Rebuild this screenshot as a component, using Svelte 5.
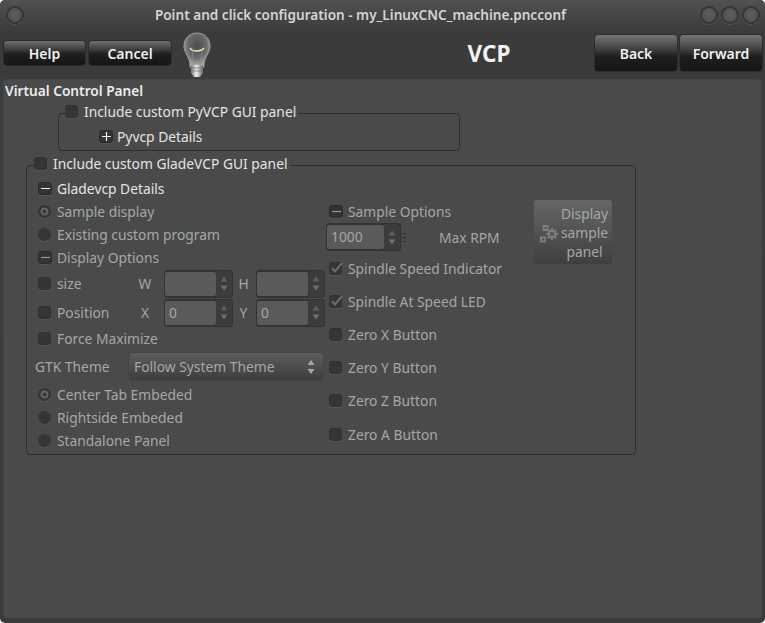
<script>
  const leftTop = [
    { kind: 'radio', label: 'Sample display', on: true },
    { kind: 'radio', label: 'Existing custom program', on: false }
  ];
  const embed = [
    { label: 'Center Tab Embeded', on: true },
    { label: 'Rightside Embeded', on: false },
    { label: 'Standalone Panel', on: false }
  ];
  const options = [
    { label: 'Spindle Speed Indicator', on: true },
    { label: 'Spindle At Speed LED', on: true },
    { label: 'Zero X Button', on: false },
    { label: 'Zero Y Button', on: false },
    { label: 'Zero Z Button', on: false },
    { label: 'Zero A Button', on: false }
  ];
</script>

{#snippet spin(value, cls = 'spin')}
  <div class={cls}>
    <span class="spin-value">{value}</span>
    <span class="spin-arrows">
      <svg width="8" height="6" viewBox="0 0 8 6"><path d="M4 0.5 7.5 5.5H0.5Z" fill="#5f5f5f" /></svg>
      <svg width="8" height="6" viewBox="0 0 8 6"><path d="M0.5 0.5H7.5L4 5.5Z" fill="#6e6e6e" /></svg>
    </span>
  </div>
{/snippet}

{#snippet check(on = false)}
  <span class="box">
    {#if on}
      <svg width="14" height="14" viewBox="0 0 14 14"><path d="M3 7 6 10.5 13 2" fill="none" stroke="#6c6c6c" stroke-width="2" /></svg>
    {/if}
  </span>
{/snippet}

{#snippet expander(minus, cls = '')}
  <span class="expander {cls}">
    <svg width="9" height="9" viewBox="0 0 9 9">
      <path d={minus ? 'M0 4.5H9' : 'M0 4.5H9M4.5 0V9'} stroke="currentColor" stroke-width="1.2" />
    </svg>
  </span>
{/snippet}

<div class="window">
  <header class="titlebar">
    <span class="dot"></span>
    <span class="title">Point and click configuration - my_LinuxCNC_machine.pncconf</span>
    <span class="dots"><span class="dot"></span><span class="dot"></span><span class="dot"></span></span>
  </header>

  <div class="toolbar">
    <div class="group small">
      <button class="tool help">Help</button>
      <button class="tool cancel">Cancel</button>
    </div>
    <svg class="bulb" width="28" height="46" viewBox="0 0 28 46">
      <defs>
        <radialGradient id="glass" cx="50%" cy="38%" r="60%">
          <stop offset="0" stop-color="#4c4c4c" />
          <stop offset="0.6" stop-color="#6a6a6a" />
          <stop offset="1" stop-color="#b5b5b5" />
        </radialGradient>
        <linearGradient id="base" x1="0" x2="1" y1="0" y2="0">
          <stop offset="0" stop-color="#777" />
          <stop offset="0.45" stop-color="#eee" />
          <stop offset="1" stop-color="#666" />
        </linearGradient>
      </defs>
      <path d="M14 1C6 1 1 7 1 14c0 7 5 10 6 18v3h14v-3c1-8 6-11 6-18C27 7 22 1 14 1Z" fill="url(#glass)" stroke="#9a9a9a" stroke-width="1" />
      <path d="M7 16c2 4 11 4 14 0" fill="none" stroke="#f1e7a0" stroke-width="1.6" />
      <path d="M9 18 11 33M19 18 17 33" fill="none" stroke="#888" stroke-width="0.8" />
      <path d="M8 33h12v8l-3 4h-6l-3-4Z" fill="url(#base)" />
      <path d="M8 36h12M8 39h12" stroke="#777" stroke-width="0.8" />
    </svg>
    <h1 class="page">VCP</h1>
    <div class="group big">
      <button class="tool back">Back</button>
      <button class="tool forward">Forward</button>
    </div>
  </div>

  <main class="panel">
    <h2 class="heading">Virtual Control Panel</h2>

    <fieldset class="frame pyvcp">
      <legend class="legend">{@render check()}<span>Include custom PyVCP GUI panel</span></legend>
      <div class="row pyvcp-row">{@render expander(false)}<span>Pyvcp Details</span></div>
    </fieldset>

    <fieldset class="frame glade">
      <legend class="legend">{@render check()}<span>Include custom GladeVCP GUI panel</span></legend>
      <div class="row details">{@render expander(true)}<span>Gladevcp Details</span></div>
      <div class="columns">
        <div class="left dim">
          {#each leftTop as item}
            <div class="row r23"><span class="radio" class:on={item.on}></span><span>{item.label}</span></div>
          {/each}
          <div class="row r23">{@render expander(true, 'dim-exp')}<span>Display Options</span></div>
          <div class="row r29 sized">
            {@render check()}<span class="name">size</span><span class="letter">W</span>
            {@render spin('')}<span class="letter second">H</span>{@render spin('')}
          </div>
          <div class="row r29 sized">
            {@render check()}<span class="name">Position</span><span class="letter">X</span>
            {@render spin('0')}<span class="letter second">Y</span>{@render spin('0')}
          </div>
          <div class="row r23">{@render check()}<span>Force Maximize</span></div>
          <div class="row theme">
            <span class="theme-label">GTK Theme</span>
            <div class="combo">
              <span>Follow System Theme</span>
              <svg width="8" height="16" viewBox="0 0 8 16"><path d="M4 1 7.5 6H0.5ZM0.5 10H7.5L4 15Z" fill="#a6a6a6" /></svg>
            </div>
          </div>
          {#each embed as item}
            <div class="row r23"><span class="radio" class:on={item.on}></span><span>{item.label}</span></div>
          {/each}
        </div>

        <div class="right dim">
          <div class="row r23">{@render expander(true, 'dim-exp')}<span>Sample Options</span></div>
          <div class="row rpm">
            {@render spin('1000', 'spin wide')}
            <span class="grip"></span>
            <span class="rpm-label">Max RPM</span>
          </div>
          {#each options as item, i}
            <div class="row r33" class:last={i === 5}>{@render check(item.on)}<span>{item.label}</span></div>
          {/each}
        </div>

        <button class="sample dim">
          <svg class="gears" width="18" height="18" viewBox="0 0 18 18">
            <g fill="none" stroke="#7c7c7c">
              <rect x="3.5" y="1" width="4" height="4" stroke-width="2" />
              <rect x="1" y="12.5" width="4" height="4" stroke-width="2" />
              <circle cx="12" cy="9" r="3.2" stroke-width="2.4" />
              <path d="M12 3v2M12 13v2M6 9h2M16 9h2M7.8 4.8l1.4 1.4M14.8 11.8l1.4 1.4M16.2 4.8l-1.4 1.4M9.2 11.8l-1.4 1.4" stroke-width="2" />
            </g>
          </svg>
          <span class="sample-text">Display<br />sample<br />panel</span>
        </button>
      </div>
    </fieldset>
  </main>
</div>

<style>
  :global(body) {
    margin: 0;
    background: #fff;
  }
  .window {
    width: 765px;
    height: 623px;
    box-sizing: border-box;
    overflow: hidden;
    border-radius: 5px;
    background: linear-gradient(#3e3e3e 0, #3a3a3a 100%);
    display: flex;
    flex-direction: column;
    font-family: "Noto Sans", sans-serif;
    font-size: 13.82px;
    color: #e4e4e4;
  }
  .titlebar {
    height: 30px;
    flex: none;
    display: flex;
    align-items: center;
    padding: 0 5px 0 6px;
    background: linear-gradient(#515151, #3c3c3c);
  }
  .title {
    flex: 1;
    text-align: center;
    font-size: 13.6px;
    font-weight: 600;
    color: #d4d4d4;
    padding: 0 3px 2px 0;
  }
  .dot {
    width: 18px;
    height: 18px;
    box-sizing: border-box;
    border-radius: 50%;
    border: 2px solid #363636;
    background: radial-gradient(circle at 50% 45%, #5e5e5e, #4c4c4c);
    box-shadow: 0 1px 1px #555;
    display: block;
  }
  .dots {
    display: flex;
    gap: 3px;
  }
  .toolbar {
    height: 49px;
    flex: none;
    display: flex;
    align-items: center;
    padding: 0 2px 0 3px;
    background: #3b3b3b;
  }
  .group {
    display: flex;
    gap: 2px;
    margin-top: -3px;
  }
  .group.big {
    gap: 1px;
  }
  .tool {
    border: 1px solid #2c2c2c;
    border-radius: 4px;
    width: 84px;
    padding: 0;
    font: inherit;
    font-size: 14px;
    font-weight: 600;
    color: #f0f0f0;
    background: linear-gradient(#6f6f6f 0, #454545 30%, #1f1f1f 55%, #161616 100%);
  }
  .tool.help {
    width: 83px;
  }
  .small .tool {
    height: 26px;
  }
  .big .tool {
    height: 38px;
    background: linear-gradient(#757575 0, #3f3f3f 40%, #1e1e1e 60%, #161616 100%);
  }
  .bulb {
    margin: 0 0 0 11px;
    flex: none;
  }
  .page {
    flex: 1;
    margin: 0;
    text-align: center;
    font-size: 22.5px;
    font-weight: 700;
    color: #f2f2f2;
    padding-left: 173px;
    line-height: 1;
  }
  .panel {
    flex: 1;
    margin: 0 3px 5px;
    background: #4a4a4a;
    border-radius: 3px;
    border: 1px solid #444;
    box-sizing: border-box;
    min-height: 0;
  }
  .heading {
    margin: 0;
    height: 24px;
    padding: 0 0 0 1px;
    font-size: 13.7px;
    font-weight: 600;
    line-height: 21px;
    color: #ececec;
  }
  .frame {
    border: 1px solid #2f2f2f;
    border-radius: 4px;
    margin: 0;
    padding: 0;
    box-sizing: border-box;
    min-width: 0;
  }
  .pyvcp {
    margin-left: 54px;
    width: 402px;
    height: 47px;
  }
  .pyvcp .legend {
    margin-left: 6px;
  }
  .glade {
    margin: 5px 0 0 22px;
    width: 610px;
    height: 299px;
  }
  .glade .legend {
    margin-left: 7px;
  }
  .legend {
    display: flex;
    align-items: center;
    gap: 6px;
    box-sizing: border-box;
    padding: 0 2px 2px 0;
    height: 18px;
    line-height: 16px;
  }
  .legend .box {
    margin-top: -2px;
  }
  .row {
    display: flex;
    align-items: center;
    gap: 6px;
    white-space: nowrap;
  }
  .pyvcp-row {
    height: 22px;
    margin: 3px 0 0 40px;
  }
  .pyvcp-row .expander {
    margin-right: -2px;
  }
  .details {
    height: 23px;
    margin: 3px 0 0 11px;
  }
  .columns {
    display: flex;
    align-items: flex-start;
    padding-left: 11px;
  }
  .left {
    width: 288px;
    flex: none;
  }
  .right {
    width: 205px;
    flex: none;
    margin-left: 3px;
  }
  .dim {
    color: #a2a8aa;
  }
  .r23 {
    height: 23px;
  }
  .r29 {
    height: 29px;
  }
  .r33 {
    height: 33px;
  }
  .r33.last {
    height: 34px;
  }
  .box {
    width: 13px;
    height: 13px;
    box-sizing: border-box;
    flex: none;
    border-radius: 3px;
    background: #353535;
    border: 1px solid #313131;
    box-shadow: 0 1px 0 #555;
    display: block;
  }
  .box svg {
    display: block;
    margin: -2px 0 0 -1px;
  }
  .radio {
    width: 13px;
    height: 13px;
    box-sizing: border-box;
    flex: none;
    border-radius: 50%;
    background: #353535;
    box-shadow: 0 1px 0 #555;
    display: block;
  }
  .radio.on {
    background: radial-gradient(circle, #3a3a3a 0, #3a3a3a 1.5px, #666 2.5px, #666 3.5px, #353535 4.5px);
  }
  .expander {
    width: 14px;
    height: 13px;
    margin-right: -1px;
    box-sizing: border-box;
    flex: none;
    border-radius: 3px;
    background: #333;
    border: 1px solid #2c2c2c;
    box-shadow: 0 1px 0 #555;
    color: #eee;
    display: flex;
    align-items: center;
    justify-content: center;
  }
  .dim-exp {
    color: #9a9a9a;
  }
  .sized {
    display: grid;
    grid-template-columns: 13px 79px 34px 69px 23px 69px;
    column-gap: 0;
  }
  .sized .name {
    padding-left: 6px;
  }
  .letter {
    text-align: center;
    padding-right: 4px;
  }
  .letter.second {
    padding-right: 2px;
  }
  .spin {
    width: 69px;
    height: 28px;
    box-sizing: border-box;
    border: 1px solid #333;
    border-radius: 3px;
    background: #333;
    display: flex;
    overflow: hidden;
  }
  .spin-value {
    flex: 1;
    background: #5a5a5a;
    border-radius: 2px;
    margin: 1px 0;
    line-height: 24px;
    padding-left: 4px;
  }
  .spin-arrows {
    width: 16px;
    flex: none;
    background: #3c3c3c;
    display: flex;
    flex-direction: column;
    align-items: center;
    justify-content: center;
    gap: 3px;
  }
  .spin-arrows svg {
    display: block;
  }
  .spin.wide {
    width: 75px;
    margin-left: -3px;
  }
  .grip {
    width: 4px;
    height: 7px;
    flex: none;
    margin-left: -5px;
    border-top: 1px solid #2f2f2f;
    border-bottom: 1px solid #2f2f2f;
    background: linear-gradient(transparent 3px, #2f2f2f 3px, #2f2f2f 4px, transparent 4px);
  }
  .rpm {
    height: 29px;
    padding-bottom: 1px;
    box-sizing: border-box;
  }
  .rpm-label {
    margin-left: 27px;
  }
  .theme {
    height: 33px;
    gap: 0;
  }
  .theme-label {
    margin-left: -3px;
    width: 93px;
    flex: none;
  }
  .combo {
    width: 196px;
    height: 29px;
    box-sizing: border-box;
    flex: none;
    display: flex;
    align-items: center;
    justify-content: space-between;
    padding: 0 8px 0 5px;
    border-radius: 4px;
    background: linear-gradient(#5c5c5c, #3e3e3e);
    border: 1px solid #444;
  }
  .sample {
    width: 78px;
    height: 64px;
    padding: 0;
    margin: 0;
    flex: none;
    border: none;
    border-radius: 3px;
    background: linear-gradient(#666, #3f3f3f);
    font: inherit;
    display: flex;
    align-items: center;
    line-height: 19px;
  }
  .gears {
    flex: none;
    margin: 3px 0 0 6px;
  }
  .sample-text {
    text-align: center;
    flex: 1;
    padding-right: 1px;
  }
</style>
